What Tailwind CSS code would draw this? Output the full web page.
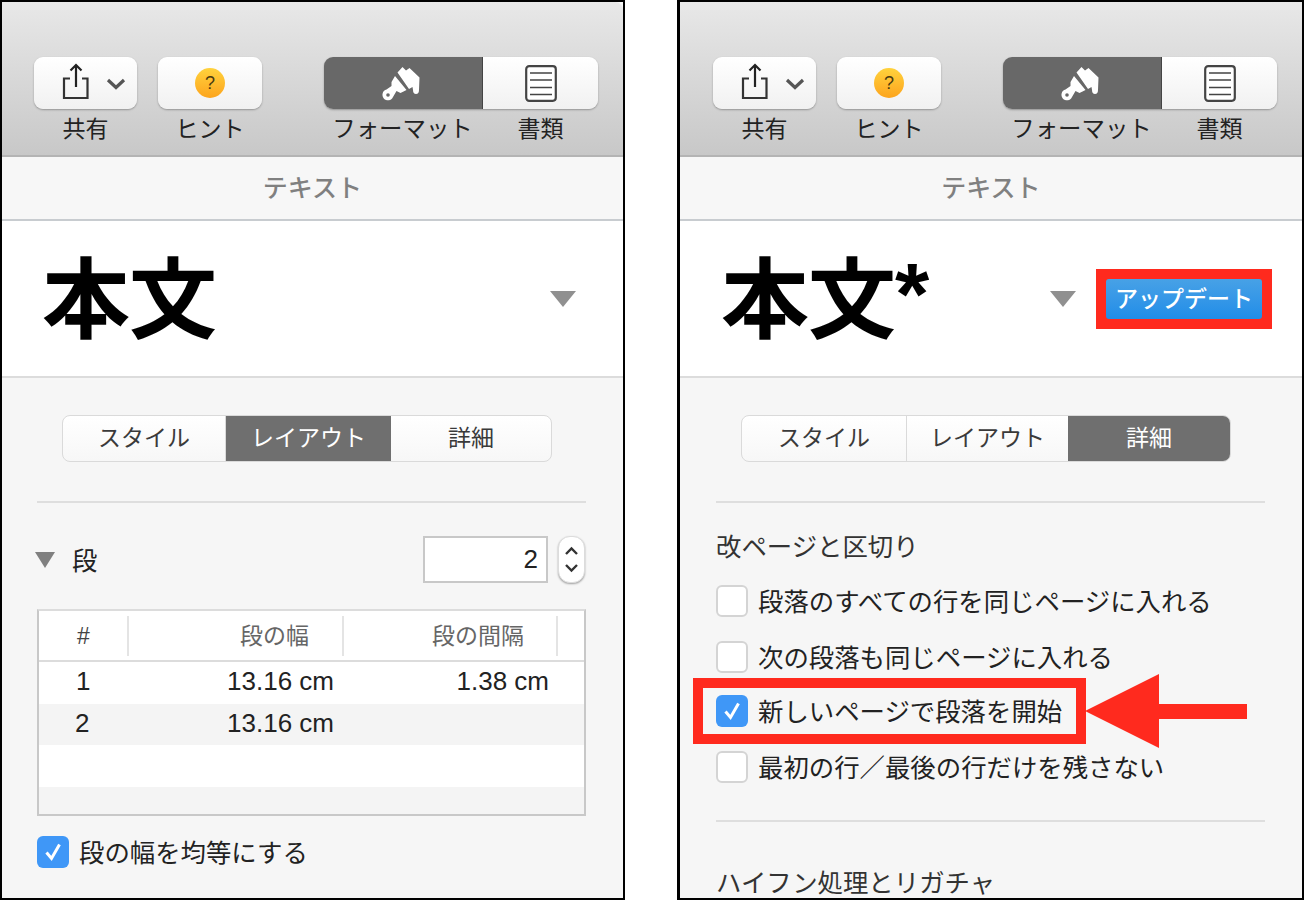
<!DOCTYPE html>
<html lang="ja">
<head>
<meta charset="UTF-8">
<title>テキスト インスペクタ</title>
<script src="https://cdn.jsdelivr.net/npm/@tailwindcss/browser@4"></script>
</head>
<body class="bg-white font-['Liberation_Sans','Noto_Sans_CJK_JP',sans-serif] text-[#222]">
<div class="relative flex w-[1304px] h-[900px] overflow-hidden">

  <!-- Left panel -->
  <section class="w-[625px] h-[900px] border-2 border-black bg-[#f6f6f6] overflow-hidden shrink-0">
    <!-- Toolbar -->
    <div class="h-[155px] pt-[55px] pl-[32px] flex bg-gradient-to-b from-[#e8e8e8] to-[#c8c8c8] border-b-2 border-[#b4b4b4] rounded-tr-[8px]">
      <div class="w-[103px] flex flex-col items-center">
        <div class="w-[103px] h-[52px] rounded-[9px] bg-gradient-to-b from-white to-[#f1f1f1] shadow-[0_1px_2px_rgba(0,0,0,0.3)]">
          <svg width="103" height="52" viewBox="0 0 103 52" fill="none">
            <path d="M36 21.500H30V41H53.500V21.500H48" stroke="#333" stroke-width="2.200"/>
            <path d="M42 8V30M36.500 13.500L42 8L47.500 13.500" stroke="#222" stroke-width="2.200"/>
            <path d="M74 23L82 30.500L90 23" stroke="#555" stroke-width="3.200"/>
          </svg>
        </div>
        <div class="mt-[5px] text-[23px] leading-[30px]">共有</div>
      </div>
      <div class="w-[104px] ml-[21px] flex flex-col items-center">
        <div class="w-[104px] h-[52px] rounded-[9px] bg-gradient-to-b from-white to-[#f1f1f1] shadow-[0_1px_2px_rgba(0,0,0,0.3)] flex items-center justify-center">
          <div class="w-[30px] h-[30px] rounded-full bg-gradient-to-b from-[#ffd23c] to-[#fca41c] flex items-center justify-center text-[18px] leading-[18px] text-[#4a3a10]">?</div>
        </div>
        <div class="mt-[5px] text-[23px] leading-[30px]">ヒント</div>
      </div>
      <div class="w-[274px] ml-[62px]">
        <div class="flex h-[52px] rounded-[9px] overflow-hidden shadow-[0_1px_2px_rgba(0,0,0,0.3)]">
          <div class="w-[159px] bg-[#686868] border-r border-[#444] flex items-center justify-center">
            <svg width="50" height="50" viewBox="3.500 -2 50 50" fill="#fff">
              <path d="M23 12.500L28 7L31.500 10.500L35 8L45 17.500L44.500 30Q44.500 34 41.500 34Q38.500 34 38.500 30L38 27L34.500 29Z"/>
              <path d="M20.500 16L32 30L26 33L22 31L18.500 37A5.500 5.500 0 1 1 12 29.500L17 26L17 22Z"/>
              <circle cx="13.500" cy="35" r="1.800" fill="#686868"/>
            </svg>
          </div>
          <div class="flex-1 bg-gradient-to-b from-white to-[#f1f1f1] flex items-center justify-center">
            <svg width="32" height="37" viewBox="0 0 32 37" fill="none">
              <rect x="1.200" y="1.200" width="29.600" height="34.600" rx="3" fill="#fff" stroke="#444" stroke-width="2.200"/>
              <path d="M5 8H27M5 15H27M5 22.500H27M5 29.500H27" stroke="#444" stroke-width="1.400"/>
            </svg>
          </div>
        </div>
        <div class="flex mt-[5px] text-[23px] leading-[30px] text-center">
          <div class="w-[159px] pr-[2px] text-[23.400px]">フォーマット</div>
          <div class="flex-1">書類</div>
        </div>
      </div>
    </div>
    <!-- Title -->
    <div class="h-[64px] pt-[2px] bg-[#f7f7f7] border-b-2 border-[#c8ccd0] flex items-center justify-center text-[25px] font-medium text-[#808080]">テキスト</div>
    <!-- Style name -->
    <div class="h-[157px] bg-white border-b-2 border-[#dcdcdc] flex items-center pl-[40px]">
      <div class="pt-[4px] text-[88px] leading-[100px] font-bold text-black w-[508px] tracking-[-1px]">本文</div>
      <svg class="mt-px" width="26" height="16" viewBox="0 0 26 16" fill="#909090"><path d="M0 0H26L13 16Z"/></svg>
    </div>
    <!-- Layout tab -->
    <div class="pl-[35px]">
      <div class="ml-[25px] mt-[37px] w-[490px] h-[47px] flex rounded-[8px] overflow-hidden bg-gradient-to-b from-white to-[#f7f7f7] border border-[#dadada] text-[23px] text-[#3a3a3a] items-stretch">
        <div class="w-[163px] flex items-center justify-center border-r border-[#dadada]">スタイル</div>
        <div class="w-[165px] flex items-center justify-center bg-[#6f6f6f] text-white">レイアウト</div>
        <div class="flex-1 flex items-center justify-center">詳細</div>
      </div>
      <div class="mt-[39px] w-[549px] h-[2px] bg-[#dedede]"></div>
      <div class="mt-[33px] w-[548px] h-[47px] flex items-center">
        <svg width="20" height="16" viewBox="0 0 20 16" fill="#808080" class="-ml-[2px]"><path d="M0 0H20L10 16Z"/></svg>
        <div class="ml-[17px] pt-[2px] text-[25.400px] leading-[30px] flex-1">段</div>
        <div class="w-[125px] h-[47px] bg-white border-2 border-[#c8c8c8] flex items-center justify-end pr-[8px] text-[26px]">2</div>
        <div class="ml-[10px] w-[27px] h-[47px] rounded-[12px] bg-white shadow-[0_1px_2px_rgba(0,0,0,0.35)] border border-[#dcdcdc]">
          <svg width="25" height="45" viewBox="0 0 25 45" fill="none" stroke="#333" stroke-width="2.400">
            <path d="M7 17L12.500 11.500L18 17M7 28L12.500 33.500L18 28"/>
          </svg>
        </div>
      </div>
      <!-- Columns table -->
      <div class="mt-[26px] w-[549px] h-[207px] bg-white border-2 border-[#c8c8c8] border-t-[#dcdcdc] text-[26px] leading-[38px]">
        <div class="h-[51px] flex items-center border-b-2 border-[#dcdcdc] text-[23px] leading-[30px] text-[#666]">
          <div class="w-[90px] h-[40px] flex items-center pl-[38px] border-r-2 border-[#e4e4e4] text-[#444]">#</div>
          <div class="w-[215px] h-[40px] flex items-center justify-end pr-[33px] border-r-2 border-[#e4e4e4]">段の幅</div>
          <div class="w-[214px] h-[40px] flex items-center justify-end pr-[32px] border-r-2 border-[#e4e4e4]">段の間隔</div>
        </div>
        <div class="flex h-[42px]">
          <div class="w-[90px] pl-[37px]">1</div>
          <div class="w-[215px] text-right pr-[10px]">13.16 cm</div>
          <div class="w-[214px] text-right pr-[9px]">1.38 cm</div>
        </div>
        <div class="flex h-[41px] bg-[#f4f4f4]">
          <div class="w-[90px] pl-[36px]">2</div>
          <div class="w-[215px] text-right pr-[10px]">13.16 cm</div>
        </div>
        <div class="h-[42px]"></div>
        <div class="h-[27px] bg-[#f4f4f4]"></div>
      </div>
      <label class="mt-[20px] flex items-center h-[32px]">
        <span class="w-[32px] h-[32px] rounded-[6px] bg-[#3f97f7] flex items-center justify-center">
          <svg width="22" height="22" viewBox="0 0 22 22" fill="none" stroke="#fff" stroke-width="3"><path d="M4.500 11.500L9.500 17.500L17.500 3.500"/></svg>
        </span>
        <span class="ml-[10px] pt-[2px] text-[25.400px] leading-[32px]">段の幅を均等にする</span>
      </label>
    </div>
  </section>

  <!-- Right panel -->
  <section class="ml-[52px] w-[627px] h-[900px] border-2 border-l-[3px] border-black bg-[#f6f6f6] overflow-hidden shrink-0">
    <div class="h-[155px] pt-[55px] pl-[33px] flex bg-gradient-to-b from-[#e8e8e8] to-[#c8c8c8] border-b-2 border-[#b4b4b4]">
      <div class="w-[103px] flex flex-col items-center">
        <div class="w-[103px] h-[52px] rounded-[9px] bg-gradient-to-b from-white to-[#f1f1f1] shadow-[0_1px_2px_rgba(0,0,0,0.3)]">
          <svg width="103" height="52" viewBox="0 0 103 52" fill="none">
            <path d="M36 21.500H30V41H53.500V21.500H48" stroke="#333" stroke-width="2.200"/>
            <path d="M42 8V30M36.500 13.500L42 8L47.500 13.500" stroke="#222" stroke-width="2.200"/>
            <path d="M74 23L82 30.500L90 23" stroke="#555" stroke-width="3.200"/>
          </svg>
        </div>
        <div class="mt-[5px] text-[23px] leading-[30px]">共有</div>
      </div>
      <div class="w-[104px] ml-[21px] flex flex-col items-center">
        <div class="w-[104px] h-[52px] rounded-[9px] bg-gradient-to-b from-white to-[#f1f1f1] shadow-[0_1px_2px_rgba(0,0,0,0.3)] flex items-center justify-center">
          <div class="w-[30px] h-[30px] rounded-full bg-gradient-to-b from-[#ffd23c] to-[#fca41c] flex items-center justify-center text-[18px] leading-[18px] text-[#4a3a10]">?</div>
        </div>
        <div class="mt-[5px] text-[23px] leading-[30px]">ヒント</div>
      </div>
      <div class="w-[274px] ml-[62px]">
        <div class="flex h-[52px] rounded-[9px] overflow-hidden shadow-[0_1px_2px_rgba(0,0,0,0.3)]">
          <div class="w-[159px] bg-[#686868] border-r border-[#444] flex items-center justify-center">
            <svg width="50" height="50" viewBox="3.500 -2 50 50" fill="#fff">
              <path d="M23 12.500L28 7L31.500 10.500L35 8L45 17.500L44.500 30Q44.500 34 41.500 34Q38.500 34 38.500 30L38 27L34.500 29Z"/>
              <path d="M20.500 16L32 30L26 33L22 31L18.500 37A5.500 5.500 0 1 1 12 29.500L17 26L17 22Z"/>
              <circle cx="13.500" cy="35" r="1.800" fill="#686868"/>
            </svg>
          </div>
          <div class="flex-1 bg-gradient-to-b from-white to-[#f1f1f1] flex items-center justify-center">
            <svg width="32" height="37" viewBox="0 0 32 37" fill="none">
              <rect x="1.200" y="1.200" width="29.600" height="34.600" rx="3" fill="#fff" stroke="#444" stroke-width="2.200"/>
              <path d="M5 8H27M5 15H27M5 22.500H27M5 29.500H27" stroke="#444" stroke-width="1.400"/>
            </svg>
          </div>
        </div>
        <div class="flex mt-[5px] text-[23px] leading-[30px] text-center">
          <div class="w-[159px] pr-[2px] text-[23.400px]">フォーマット</div>
          <div class="flex-1">書類</div>
        </div>
      </div>
    </div>
    <div class="h-[64px] pt-[2px] bg-[#f7f7f7] border-b-2 border-[#c8ccd0] flex items-center justify-center text-[25px] font-medium text-[#808080]">テキスト</div>
    <div class="h-[157px] bg-white border-b-2 border-[#dcdcdc] flex items-center pl-[41px]">
      <div class="pt-[4px] text-[88px] leading-[100px] font-bold text-black w-[329px] tracking-[-1px]">本文<span class="relative -top-[7px]">*</span></div>
      <svg class="mt-px" width="26" height="16" viewBox="0 0 26 16" fill="#909090"><path d="M0 0H26L13 16Z"/></svg>
      <div class="ml-[20px] mt-px w-[176px] h-[60px] bg-[#ff2a1e] flex items-center justify-center">
        <div class="w-[156px] h-[40px] rounded-[3px] bg-gradient-to-b from-[#47a1e6] to-[#1f8de8] text-white text-[23px] font-medium flex items-center justify-center">アップデート</div>
      </div>
    </div>
    <div class="pl-[36px]">
      <div class="ml-[25px] mt-[37px] w-[490px] h-[47px] flex rounded-[8px] overflow-hidden bg-gradient-to-b from-white to-[#f7f7f7] border border-[#dadada] text-[23px] text-[#3a3a3a] items-stretch">
        <div class="w-[165px] flex items-center justify-center border-r border-[#dadada]">スタイル</div>
        <div class="w-[161px] flex items-center justify-center">レイアウト</div>
        <div class="flex-1 flex items-center justify-center bg-[#6f6f6f] text-white">詳細</div>
      </div>
      <div class="mt-[39px] w-[549px] h-[2px] bg-[#dedede]"></div>
      <div class="mt-[29px] text-[25.400px] leading-[30px] text-[#333]">改ページと区切り</div>
      <label class="mt-[23px] flex items-center h-[32px]">
        <span class="w-[32px] h-[32px] rounded-[6px] bg-white border-2 border-[#d4d4d4]"></span>
        <span class="ml-[10px] pt-[2px] text-[25.400px] leading-[32px]">段落のすべての行を同じページに入れる</span>
      </label>
      <label class="mt-[24px] flex items-center h-[32px]">
        <span class="w-[32px] h-[32px] rounded-[6px] bg-white border-2 border-[#d4d4d4]"></span>
        <span class="ml-[10px] pt-[2px] text-[25.400px] leading-[32px]">次の段落も同じページに入れる</span>
      </label>
      <label class="mt-[22px] flex items-center h-[32px]">
        <span class="w-[32px] h-[32px] rounded-[6px] bg-[#3f97f7] flex items-center justify-center">
          <svg width="22" height="22" viewBox="0 0 22 22" fill="none" stroke="#fff" stroke-width="3"><path d="M4.500 11.500L9.500 17.500L17.500 3.500"/></svg>
        </span>
        <span class="ml-[10px] pt-[2px] text-[25.400px] leading-[32px]">新しいページで段落を開始</span>
      </label>
      <label class="mt-[24px] flex items-center h-[32px]">
        <span class="w-[32px] h-[32px] rounded-[6px] bg-white border-2 border-[#d4d4d4]"></span>
        <span class="ml-[10px] pt-[2px] text-[25.400px] leading-[32px]">最初の行／最後の行だけを残さない</span>
      </label>
      <div class="mt-[37px] w-[549px] h-[2px] bg-[#dedede]"></div>
      <div class="mt-[46px] text-[25.400px] leading-[30px] text-[#333]">ハイフン処理とリガチャ</div>
    </div>
  </section>

  <!-- Red annotations -->
  <div class="absolute left-[693px] top-[678px] w-[393px] h-[66px] border-[10px] border-[#ff2a1e]"></div>
  <svg class="absolute left-[1085px] top-[674px]" width="163" height="74" viewBox="0 0 163 74" fill="#ff2a1e">
    <path d="M0 37L74 0V30H162V45H74V74Z"/>
  </svg>
</div>
</body>
</html>
